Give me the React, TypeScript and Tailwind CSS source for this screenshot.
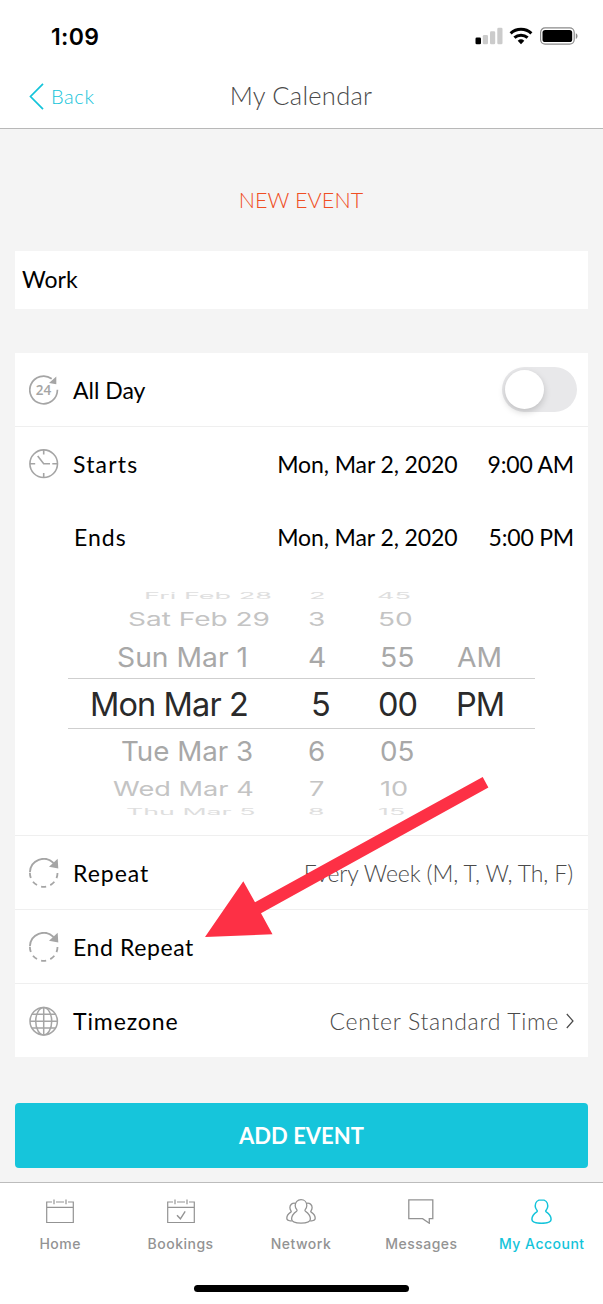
import { ReactNode } from 'react';
import clsx from 'clsx';

const pickerRows = [
  {
    cells: ['Fri Feb 28', '2', '45'],
    row: 'h-[15px] pl-[76px] grid-cols-[165px_68px_auto] text-[#dedede] text-[28px]',
    cell: 'scale-x-[0.965] scale-y-[0.3]',
  },
  {
    cells: ['Sat Feb 29', '3', '50'],
    row: 'h-8 pl-[60px] grid-cols-[180px_70px_auto] text-[#c4c4c4] text-[28px]',
    cell: 'scale-y-[0.66]',
  },
  {
    cells: ['Sun Mar 1', '4', '55', 'AM'],
    row: 'h-[43px] pl-[49px] grid-cols-[191px_72px_77px_auto] text-[#a8a8a8] text-[28px]',
    cell: 'scale-x-[1.01] scale-y-[0.97]',
  },
  {
    cells: ['Mon Mar 2', '5', '00', 'PM'],
    row: 'h-[51px] border-y border-[#cfcfcf] pl-[22px] grid-cols-[221px_67px_78px_auto] text-[#2a2a2a] text-[32.5px] tracking-[-0.9px]',
    cell: 'translate-y-[1.5px]',
  },
  {
    cells: ['Tue Mar 3', '6', '05'],
    row: 'h-11 pl-[53px] grid-cols-[187px_72px_auto] text-[#a8a8a8] text-[28px]',
    cell: 'scale-x-[0.99] scale-y-[0.97]',
  },
  {
    cells: ['Wed Mar 4', '7', '10'],
    row: 'h-8 pl-[45px] grid-cols-[196px_71px_auto] text-[#c4c4c4] text-[28px]',
    cell: 'scale-x-[0.97] scale-y-[0.7]',
  },
  {
    cells: ['Thu Mar 5', '8', '15'],
    row: 'h-3.5 pl-[58px] grid-cols-[182px_70px_auto] text-[#dedede] text-[28px]',
    cell: 'scale-x-[0.955] scale-y-[0.32]',
  },
];

const AllDayIcon = () => (
  <svg width="30" height="30" fill="none" stroke="#a5a5a5" strokeWidth="1.7">
    <path d="M28.4 14.8A13.8 13.8 0 1 1 22.7 3.8" />
    <path d="M27.3 1.6v7.7L20 8.100z" fill="#a5a5a5" stroke="none" />
    <text
      x="14.6"
      y="20"
      textAnchor="middle"
      fill="#a5a5a5"
      stroke="none"
      className="font-['Open_Sans'] text-[13.5px] font-semibold"
    >
      24
    </text>
  </svg>
);

const ClockIcon = () => (
  <svg width="30" height="30" fill="none" stroke="#a5a5a5" strokeWidth="1.6">
    <circle cx="14.7" cy="14.7" r="13.8" />
    <path d="M14.7 1v4.5M14.7 24v4.5M1 14.7h5.2M23.3 14.7h5.2M8.7 6.9l6 7.8H21" />
  </svg>
);

const RepeatIcon = () => (
  <svg width="30" height="30" fill="none" stroke="#a5a5a5" strokeWidth="1.8">
    <path d="M.9 14.3A13.8 13.8 0 0 1 24.5 5" />
    <path d="M28.5 15a13.8 13.8 0 0 1-27.6 0" strokeDasharray="5.2 4.3" />
    <path d="M28.7.8l.6 9.7-9.3-1.7z" fill="#a5a5a5" stroke="none" />
  </svg>
);

const GlobeIcon = () => (
  <svg width="30" height="30" fill="none" stroke="#a5a5a5" strokeWidth="1.5">
    <circle cx="14.7" cy="15.2" r="13.7" />
    <ellipse cx="14.7" cy="15.2" rx="8" ry="13.7" />
    <path d="M14.7 1.5v27.4M1 15.2h27.4M3 8.3h23.4M3 22.1h23.4" />
  </svg>
);

const CalendarIcon = ({ checked }: { checked?: boolean }) => (
  <svg width="28" height="25" fill="none" stroke="currentColor" strokeWidth="1.2">
    <path d="M6 3H.7v20.5h26.6V3H22M10 3h8M.7 8.3h26.6M8 .6v4.6M20 .6v4.6" />
    {checked && <path d="M10 16.2l3.4 3.6 4.8-7.4" strokeWidth="1.4" />}
  </svg>
);

const NetworkIcon = () => (
  <svg width="30" height="25" fill="none" stroke="currentColor" strokeWidth="1.3">
    <path d="M15 .7c-3.5 0-5.800 2.600-5.800 5.800 0 2.100.9 3.300 1.600 4.200.5.700.3 1.100-.2 1.500-2.700 1.800-5 4.700-5 7.900 0 3 3.600 4.100 9.400 4.100s9.400-1.100 9.400-4.100c0-3.200-2.300-6.100-5-7.900-.5-.4-.7-.8-.2-1.500.7-.9 1.600-2.100 1.600-4.200C20.800 3.300 18.500.7 15 .7z" />
    <path d="M9.300 4.300C6.300 3.700 3.900 5.700 3.900 8.500c0 1.600.6 2.600 1.100 3.300.4.600.3 1-.2 1.300C2.500 14.500.8 16.800.8 19.200c0 1.700 1.700 2.600 4.900 2.800M20.700 4.300c3-.6 5.400 1.400 5.400 4.200 0 1.600-.6 2.600-1.100 3.300-.4.600-.3 1 .2 1.300 2.300 1.400 4 3.700 4 6.100 0 1.700-1.700 2.600-4.900 2.800" />
  </svg>
);

const MessageIcon = () => (
  <svg width="26" height="25" fill="none" stroke="currentColor" strokeWidth="1.3">
    <path d="M.8.8h24v18.800h-3.500v4.600l-6.700-4.600H.8z" />
  </svg>
);

const AccountIcon = () => (
  <svg width="21" height="25" fill="none" stroke="currentColor" strokeWidth="1.5">
    <path d="M10.500.8C6.700.8 4.200 3.500 4.200 7c0 2.100 1 3.400 1.800 4.400.5.600.3 1-.2 1.400C3 14.600.9 17.300.9 20.300c0 2.900 3.700 4 9.600 4s9.600-1.100 9.600-4c0-3-2.100-5.700-4.900-7.500-.5-.4-.7-.8-.2-1.400.8-1 1.800-2.300 1.800-4.400C16.800 3.500 14.300.8 10.500.8z" />
  </svg>
);

const tabs = [
  { label: 'Home', icon: <CalendarIcon /> },
  { label: 'Bookings', icon: <CalendarIcon checked /> },
  { label: 'Network', icon: <NetworkIcon /> },
  { label: 'Messages', icon: <MessageIcon /> },
  { label: 'My Account', icon: <AccountIcon />, active: true },
];

interface RowProps {
  icon?: ReactNode;
  label: string;
  labelClass?: string;
  height?: string;
  children?: ReactNode;
}

const Row = ({ icon, label, labelClass, height = 'h-[74px]', children }: RowProps) => (
  <div className={clsx('flex items-center px-[14px]', height)}>
    <div className="w-11">{icon}</div>
    <span className={labelClass}>{label}</span>
    <div className="ml-auto flex items-center">{children}</div>
  </div>
);

const StatusBar = () => (
  <div className="flex h-[66px] items-start justify-between pt-[22px] pr-[25px] pl-[51px]">
    <span className="pt-px font-['Inter'] text-[23px] leading-7 font-semibold tracking-[0.3px]">
      1:09
    </span>
    <svg width="103" height="18" className="mt-[5px]">
      <rect x="0.5" y="10.5" width="5.5" height="6.7" rx="1.3" />
      <g fill="#cbcbcb">
        <rect x="7.8" y="8" width="5.2" height="9.2" rx="1.3" />
        <rect x="15" y="4.2" width="5.2" height="13" rx="1.3" />
        <rect x="22.3" y="0.8" width="5.2" height="16.4" rx="1.3" />
      </g>
      <g fill="none" stroke="#000" strokeWidth="3">
        <path d="M35.600 6.300a15.400 15.400 0 0 1 20.800 0" />
        <path d="M39.400 10.700a9.800 9.800 0 0 1 13.200 0" />
      </g>
      <path d="M42.700 13.700a5 5 0 0 1 6.600 0L46 17.200z" />
      <rect
        x="65.6"
        y="0.9"
        width="33.6"
        height="16.2"
        rx="4.5"
        fill="none"
        stroke="#8a8a8a"
        strokeWidth="1.2"
      />
      <rect x="67.5" y="2.9" width="29.7" height="12.2" rx="2.7" />
      <path d="M100.800 6.200c2.300.8 2.300 4.900 0 5.700z" fill="#8a8a8a" />
    </svg>
  </div>
);

export default function App() {
  return (
    <div className="relative flex h-[1304px] w-[603px] flex-col overflow-hidden bg-[#f4f4f4] font-['Lato',sans-serif] text-[23px] leading-7 text-black">
      <header className="h-[129px] border-b border-[#b8b8b8] bg-white">
        <StatusBar />
        <div className="grid h-[60px] grid-cols-[200px_1fr_200px] items-center">
          <div className="flex items-center gap-[7px] pl-[29px] text-[20px] font-light tracking-[0.6px] text-[#14c4da]">
            <svg width="15" height="27" fill="none" stroke="currentColor" strokeWidth="1.7">
              <path d="M14 .8L1.500 13.500 14 26.200" />
            </svg>
            <span>Back</span>
          </div>
          <h1 className="pr-px pb-0.5 text-center text-[25.5px] font-light tracking-[0.25px] text-[#4a4a4a]">
            My Calendar
          </h1>
        </div>
      </header>

      <main className="px-[15px]">
        <h2 className="mt-[57px] pr-px text-center text-[21.5px] font-light tracking-[0.1px] text-[#f04e23]">
          NEW EVENT
        </h2>

        <div className="mt-[37px] flex h-[58px] items-center bg-white pb-0.5 pl-[7px]">
          Work
        </div>

        <section className="mt-11 divide-y divide-[#efefef] bg-white">
          <Row icon={<AllDayIcon />} label="All Day">
            <div className="-mr-[3px] h-[45px] w-[75px] rounded-full bg-[#e8e8ea] p-[3px]">
              <div className="size-[39px] rounded-full bg-white shadow-[0_3px_7px_rgba(0,0,0,0.18)]" />
            </div>
          </Row>

          <div className="h-[409px]">
            <Row icon={<ClockIcon />} label="Starts" labelClass="tracking-[1.2px]">
              <span className="mr-[30px] tracking-[-0.1px]">Mon, Mar 2, 2020</span>
              <span className="tracking-[-0.2px]">9:00 AM</span>
            </Row>
            <Row label="Ends" labelClass="pl-px tracking-[1px]" height="h-[72px]">
              <span className="mr-[31px] tracking-[-0.1px]">Mon, Mar 2, 2020</span>
              <span className="tracking-[-0.2px]">5:00 PM</span>
            </Row>
            <div className="mt-[15px] ml-[53px] w-[467px] font-['Inter']">
              {pickerRows.map(({ cells, row, cell }) => (
                <div key={cells[0]} className={clsx('grid items-center', row)}>
                  {cells.map((text) => (
                    <span
                      key={text}
                      className={clsx('-my-4 h-[1em] origin-left leading-none whitespace-nowrap', cell)}
                    >
                      {text}
                    </span>
                  ))}
                </div>
              ))}
            </div>
          </div>

          <Row icon={<RepeatIcon />} label="Repeat" labelClass="tracking-[1px]">
            <span className="mr-px font-light tracking-[-0.12px] text-[#4a4a4a]">
              Every Week (M, T, W, Th, F)
            </span>
          </Row>
          <Row icon={<RepeatIcon />} label="End Repeat" labelClass="tracking-[0.6px]" />
          <Row
            icon={<GlobeIcon />}
            label="Timezone"
            labelClass="tracking-[0.9px]"
            height="h-[73px]"
          >
            <span className="font-light tracking-[0.7px] text-[#4a4a4a]">
              Center Standard Time
            </span>
            <svg width="8" height="16" className="ml-[7px]" fill="none" stroke="#4a4a4a" strokeWidth="1.2">
              <path d="M.8 1l6.200 7-6.200 7" />
            </svg>
          </Row>
        </section>

        <button className="mt-[46px] block h-[65px] w-full rounded-[4px] bg-[#16c5db] text-[22px] font-bold text-white">
          ADD EVENT
        </button>
      </main>

      <nav className="mt-auto grid h-[122px] grid-cols-5 border-t border-[#bcbcbc] bg-white pt-4 pr-px font-['Inter'] text-[14px] font-medium tracking-[0.5px] text-[#939393]">
        {tabs.map(({ label, icon, active }) => (
          <div
            key={label}
            className={clsx('flex flex-col items-center gap-[6px]', active && 'text-[#14c4da]')}
          >
            {icon}
            <span>{label}</span>
          </div>
        ))}
        <div className="col-span-5 mb-3 h-[7px] w-[215px] self-end justify-self-center rounded-full bg-black" />
      </nav>

      <svg className="pointer-events-none absolute inset-0" width="603" height="1304">
        <path
          d="M205 937L243.300 881.300 255 902.300 482.700 777 488.400 787.400 261 913.300 272.500 934.300z"
          fill="#fd3045"
        />
      </svg>
    </div>
  );
}
